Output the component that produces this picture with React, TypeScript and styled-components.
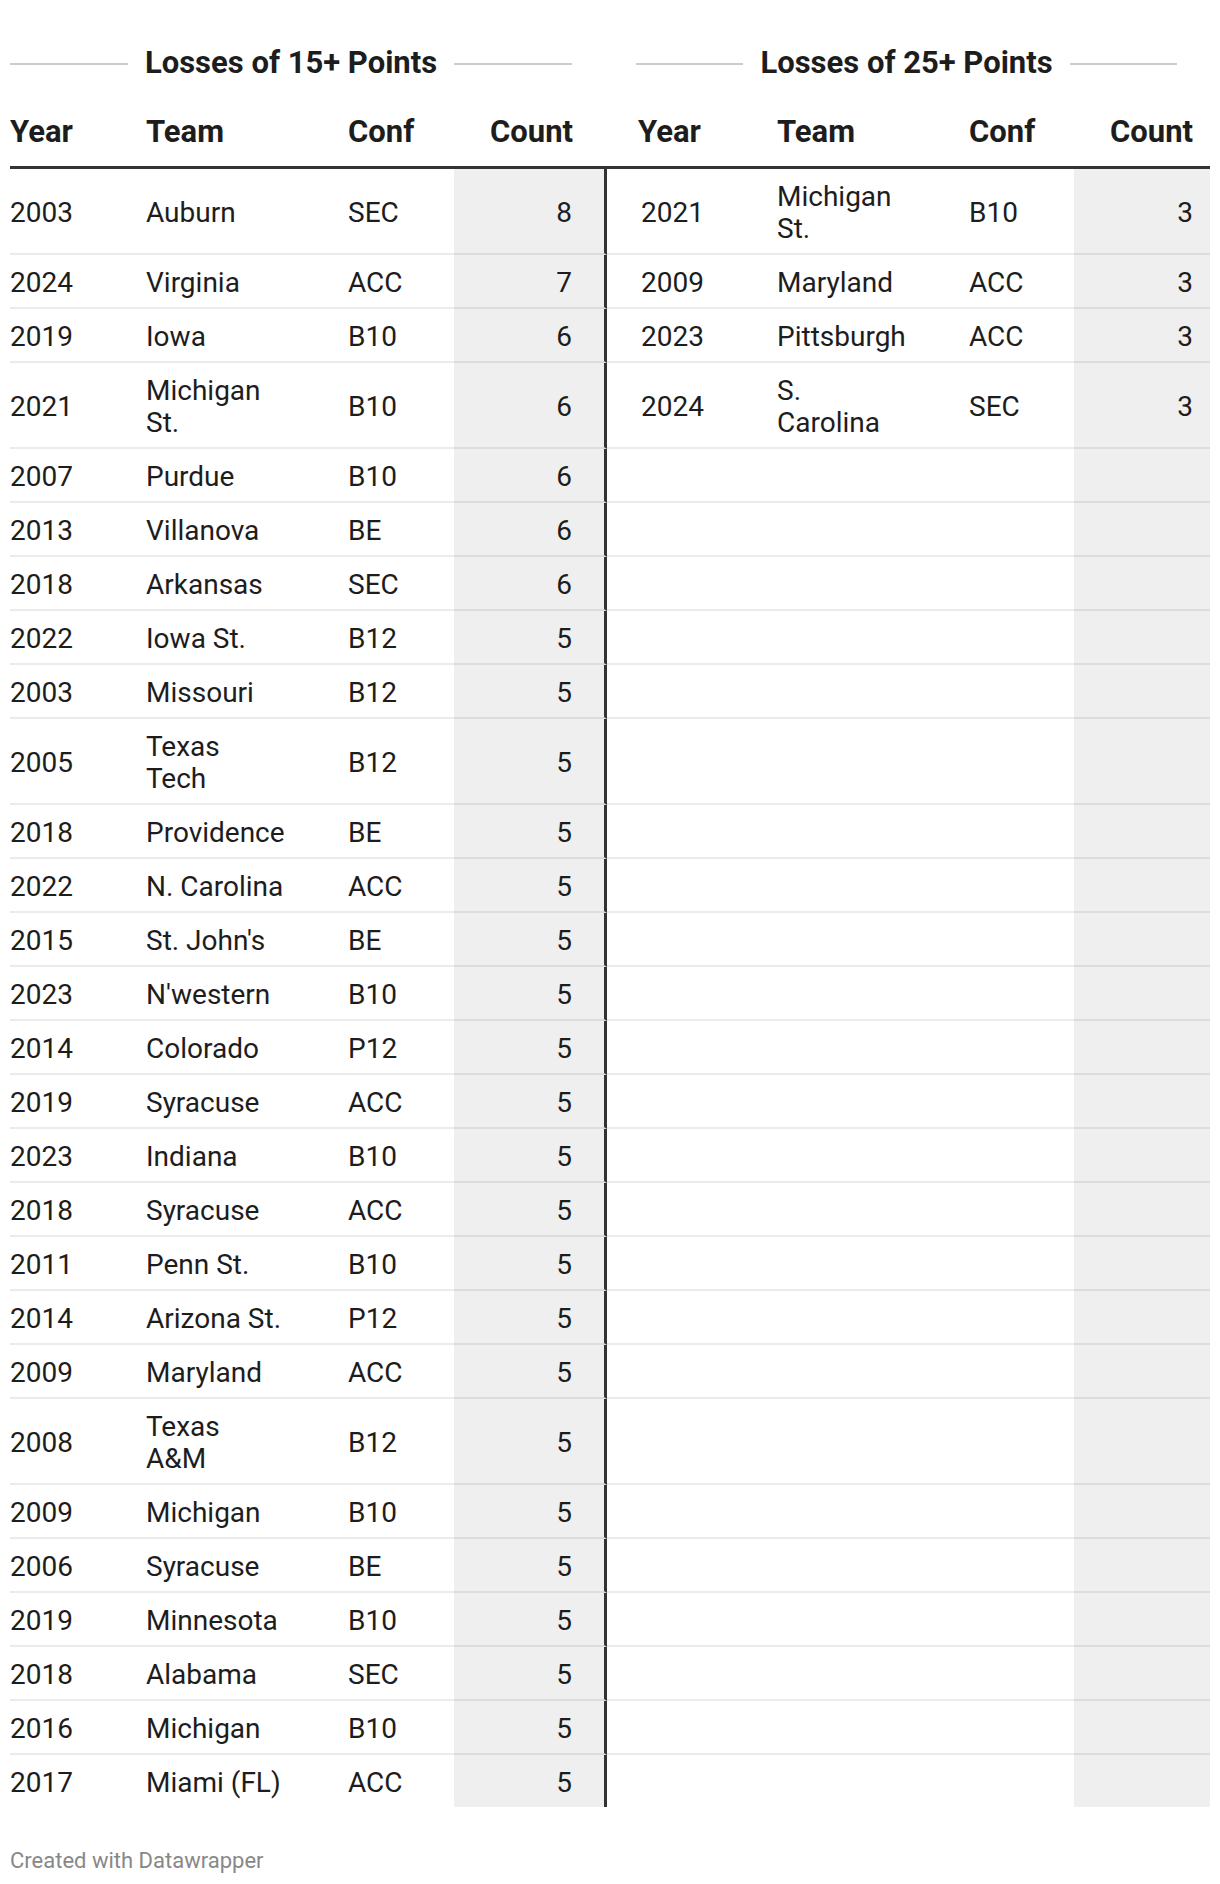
import React from "react"
import styled, { createGlobalStyle } from "styled-components"

type Row = [string, string, string, number]

const losses15: Row[] = [
  ["2003", "Auburn", "SEC", 8],
  ["2024", "Virginia", "ACC", 7],
  ["2019", "Iowa", "B10", 6],
  ["2021", "Michigan\nSt.", "B10", 6],
  ["2007", "Purdue", "B10", 6],
  ["2013", "Villanova", "BE", 6],
  ["2018", "Arkansas", "SEC", 6],
  ["2022", "Iowa St.", "B12", 5],
  ["2003", "Missouri", "B12", 5],
  ["2005", "Texas\nTech", "B12", 5],
  ["2018", "Providence", "BE", 5],
  ["2022", "N. Carolina", "ACC", 5],
  ["2015", "St. John's", "BE", 5],
  ["2023", "N'western", "B10", 5],
  ["2014", "Colorado", "P12", 5],
  ["2019", "Syracuse", "ACC", 5],
  ["2023", "Indiana", "B10", 5],
  ["2018", "Syracuse", "ACC", 5],
  ["2011", "Penn St.", "B10", 5],
  ["2014", "Arizona St.", "P12", 5],
  ["2009", "Maryland", "ACC", 5],
  ["2008", "Texas\nA&M", "B12", 5],
  ["2009", "Michigan", "B10", 5],
  ["2006", "Syracuse", "BE", 5],
  ["2019", "Minnesota", "B10", 5],
  ["2018", "Alabama", "SEC", 5],
  ["2016", "Michigan", "B10", 5],
  ["2017", "Miami (FL)", "ACC", 5]
]

const losses25: Row[] = [
  ["2021", "Michigan\nSt.", "B10", 3],
  ["2009", "Maryland", "ACC", 3],
  ["2023", "Pittsburgh", "ACC", 3],
  ["2024", "S.\nCarolina", "SEC", 3]
]

// padL/padR are for header cells; body cells may override
type Col = {
  right?: boolean
  padL: number
  padR: number
  bodyPadL?: number
  bodyPadR?: number
  shaded?: boolean
  split?: boolean
}

const cols: Col[] = [
  { padL: 0, padR: 0 },
  { padL: 0, padR: 0 },
  { padL: 0, padR: 0 },
  { right: true, padL: 0, padR: 34, bodyPadR: 32, shaded: true, split: true },
  { padL: 31, padR: 0, bodyPadL: 34 },
  { padL: 0, padR: 0 },
  { padL: 0, padR: 0 },
  { right: true, padL: 0, padR: 17, shaded: true }
]

const headers = ["Year", "Team", "Conf", "Count", "Year", "Team", "Conf", "Count"]

const GlobalStyle = createGlobalStyle`
  body {
    margin: 0;
    background: #ffffff;
    font-family: Roboto, "Liberation Sans", sans-serif;
    color: #1d1d1d;
  }
`

const Page = styled.div`
  width: 1200px;
  padding: 45px 10px 0;
`

const TitleRow = styled.div`
  display: grid;
  grid-template-columns: 597px 603px;
  margin-bottom: 33px;
`

const TitleGroup = styled.div<{ $padL: number; $padR: number }>`
  display: flex;
  align-items: center;
  gap: 17px;
  padding-left: ${p => p.$padL}px;
  padding-right: ${p => p.$padR}px;
`

const Rule = styled.div`
  flex: 1;
  height: 2px;
  margin-top: 2px;
  background: #cccccc;
`

const Title = styled.div`
  font-size: 31px;
  line-height: 36px;
  font-weight: 700;
  color: #1d1d1d;
  white-space: nowrap;
`

const Grid = styled.div`
  display: grid;
  grid-template-columns: 136px 202px 106px 153px 170px 192px 105px 136px;
`

const HeadRow = styled(Grid)`
  border-bottom: 3px solid #333333;
`

const HeadCell = styled.div<{ $col: Col }>`
  font-size: 31px;
  line-height: 36px;
  font-weight: 700;
  padding: 0 ${p => p.$col.padR}px 16px ${p => p.$col.padL}px;
  text-align: ${p => (p.$col.right ? "right" : "left")};
  white-space: nowrap;
`

const BodyRow = styled(Grid)`
  &:last-child > div {
    border-bottom: none;
  }
`

const Cell = styled.div<{ $col: Col }>`
  display: flex;
  align-items: center;
  justify-content: ${p => (p.$col.right ? "flex-end" : "flex-start")};
  font-size: 28px;
  line-height: 32px;
  padding: 12px ${p => p.$col.bodyPadR ?? p.$col.padR}px 8px
    ${p => p.$col.bodyPadL ?? p.$col.padL}px;
  white-space: pre-line;
  background: ${p => (p.$col.shaded ? "#efefef" : "transparent")};
  border-bottom: 2px solid rgba(0, 0, 0, 0.08);
  border-right: ${p => (p.$col.split ? "3px solid #333333" : "none")};
`

const Footer = styled.div`
  margin-top: 41px;
  font-size: 22px;
  line-height: 26px;
  color: #888888;
`

export default function App() {
  return (
    <Page>
      <GlobalStyle />
      <TitleRow>
        <TitleGroup $padL={0} $padR={35}>
          <Rule />
          <Title>Losses of 15+ Points</Title>
          <Rule />
        </TitleGroup>
        <TitleGroup $padL={29} $padR={33}>
          <Rule />
          <Title>Losses of 25+ Points</Title>
          <Rule />
        </TitleGroup>
      </TitleRow>
      <HeadRow>
        {headers.map((h, i) => (
          <HeadCell key={i} $col={cols[i]}>
            {h}
          </HeadCell>
        ))}
      </HeadRow>
      <div>
        {losses15.map((row, r) => {
          const other = losses25[r]
          const values = [...row, ...(other ?? ["", "", "", ""])]
          return (
            <BodyRow key={r}>
              {values.map((v, i) => (
                <Cell key={i} $col={cols[i]}>
                  {v}
                </Cell>
              ))}
            </BodyRow>
          )
        })}
      </div>
      <Footer>Created with Datawrapper</Footer>
    </Page>
  )
}
